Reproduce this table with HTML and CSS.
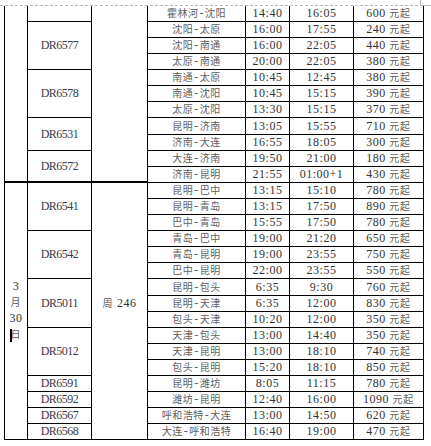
FILE: index.html
```html
<!DOCTYPE html>
<html lang="zh-CN">
<head>
<meta charset="utf-8">
<title>航班表</title>
<link rel="stylesheet" href="styles.css">
</head>
<body>
<div class="sheet">
  <div class="cut"></div>
  <span class="mark-v"></span><span class="mark-h"></span>
  <table class="tt">
    <colgroup>
      <col class="c1"><col class="c2"><col class="c3"><col class="c4"><col class="c5"><col class="c6"><col class="c7">
    </colgroup>
    <tbody>
      <tr class="r0"><td class="first" rowspan="11"></td><td class="first"></td><td class="first" rowspan="11"></td><td class="rt first">霍林河<span class="d">-</span>沈阳</td><td class="first">14:40</td><td class="first">16:05</td><td class="first">600 <span class="cn">元起</span></td></tr>
      <tr><td class="fn" rowspan="3">DR6577</td><td class="rt">沈阳<span class="d">-</span>太原</td><td>16:00</td><td>17:55</td><td>240 <span class="cn">元起</span></td></tr>
      <tr><td class="rt">沈阳<span class="d">-</span>南通</td><td>16:00</td><td>22:05</td><td>440 <span class="cn">元起</span></td></tr>
      <tr><td class="rt">太原<span class="d">-</span>南通</td><td>20:00</td><td>22:05</td><td>380 <span class="cn">元起</span></td></tr>
      <tr><td class="fn" rowspan="3">DR6578</td><td class="rt">南通<span class="d">-</span>太原</td><td>10:45</td><td>12:45</td><td>380 <span class="cn">元起</span></td></tr>
      <tr><td class="rt">南通<span class="d">-</span>沈阳</td><td>10:45</td><td>15:15</td><td>390 <span class="cn">元起</span></td></tr>
      <tr><td class="rt">太原<span class="d">-</span>沈阳</td><td>13:30</td><td>15:15</td><td>370 <span class="cn">元起</span></td></tr>
      <tr class="tall"><td class="fn" rowspan="2">DR6531</td><td class="rt">昆明<span class="d">-</span>济南</td><td>13:05</td><td>15:55</td><td>710 <span class="cn">元起</span></td></tr>
      <tr><td class="rt">济南<span class="d">-</span>大连</td><td>16:55</td><td>18:05</td><td>300 <span class="cn">元起</span></td></tr>
      <tr><td class="fn" rowspan="2">DR6572</td><td class="rt">大连<span class="d">-</span>济南</td><td>19:50</td><td>21:00</td><td>180 <span class="cn">元起</span></td></tr>
      <tr><td class="rt">济南<span class="d">-</span>昆明</td><td>21:55</td><td>01:00+1</td><td>430 <span class="cn">元起</span></td></tr>
      <tr><td class="grp date" rowspan="16">3<br><span class="cn">月</span><br>30<br><span class="cn">日</span></td><td class="grp fn" rowspan="3">DR6541</td><td class="grp week" rowspan="16"><span class="cn">周</span> 246</td><td class="rt">昆明<span class="d">-</span>巴中</td><td>13:15</td><td>15:10</td><td>780 <span class="cn">元起</span></td></tr>
      <tr><td class="rt">昆明<span class="d">-</span>青岛</td><td>13:15</td><td>17:50</td><td>890 <span class="cn">元起</span></td></tr>
      <tr><td class="rt">巴中<span class="d">-</span>青岛</td><td>15:55</td><td>17:50</td><td>780 <span class="cn">元起</span></td></tr>
      <tr><td class="fn" rowspan="3">DR6542</td><td class="rt">青岛<span class="d">-</span>巴中</td><td>19:00</td><td>21:20</td><td>650 <span class="cn">元起</span></td></tr>
      <tr><td class="rt">青岛<span class="d">-</span>昆明</td><td>19:00</td><td>23:55</td><td>750 <span class="cn">元起</span></td></tr>
      <tr><td class="rt">巴中<span class="d">-</span>昆明</td><td>22:00</td><td>23:55</td><td>550 <span class="cn">元起</span></td></tr>
      <tr class="tall"><td class="fn" rowspan="3">DR5011</td><td class="rt">昆明<span class="d">-</span>包头</td><td>6:35</td><td>9:30</td><td>760 <span class="cn">元起</span></td></tr>
      <tr><td class="rt">昆明<span class="d">-</span>天津</td><td>6:35</td><td>12:00</td><td>830 <span class="cn">元起</span></td></tr>
      <tr><td class="rt">包头<span class="d">-</span>天津</td><td>10:20</td><td>12:00</td><td>350 <span class="cn">元起</span></td></tr>
      <tr><td class="fn" rowspan="3">DR5012</td><td class="rt">天津<span class="d">-</span>包头</td><td>13:00</td><td>14:40</td><td>350 <span class="cn">元起</span></td></tr>
      <tr><td class="rt">天津<span class="d">-</span>昆明</td><td>13:00</td><td>18:10</td><td>740 <span class="cn">元起</span></td></tr>
      <tr><td class="rt">包头<span class="d">-</span>昆明</td><td>15:20</td><td>18:10</td><td>850 <span class="cn">元起</span></td></tr>
      <tr><td class="fn">DR6591</td><td class="rt">昆明<span class="d">-</span>潍坊</td><td>8:05</td><td>11:15</td><td>780 <span class="cn">元起</span></td></tr>
      <tr><td class="fn">DR6592</td><td class="rt">潍坊<span class="d">-</span>昆明</td><td>12:40</td><td>16:00</td><td>1090 <span class="cn">元起</span></td></tr>
      <tr><td class="fn">DR6567</td><td class="rt">呼和浩特<span class="d">-</span>大连</td><td>13:00</td><td>14:50</td><td>620 <span class="cn">元起</span></td></tr>
      <tr><td class="fn">DR6568</td><td class="rt">大连<span class="d">-</span>呼和浩特</td><td>16:40</td><td>19:00</td><td>470 <span class="cn">元起</span></td></tr>
    </tbody>
  </table>
  <span class="caret"></span>
</div>
</body>
</html>
```

FILE: styles.css
```css
html, body {
  margin: 0;
  padding: 0;
  background: #ffffff;
}

.sheet {
  position: relative;
  width: 431px;
  height: 446px;
  overflow: hidden;
  font-family: "Liberation Serif", "Noto Sans CJK SC", serif;
  font-size: 12px;
  color: #333333;
}

.cut {
  margin-top: 5px;
  width: 420px;
  height: 1px;
  background: repeating-linear-gradient(to right, #b8b8b8 0 3px, transparent 3px 5px);
}

.mark-v {
  position: absolute;
  left: 420px;
  top: 0;
  width: 1px;
  height: 6px;
  background: #b8b8b8;
}

.mark-h {
  position: absolute;
  left: 420px;
  top: 5px;
  width: 11px;
  height: 1px;
  background: #b8b8b8;
}

.tt {
  margin-left: 4px;
  width: 420px;
  table-layout: fixed;
  border-collapse: collapse;
}

.c1 { width: 23px; }
.c2 { width: 64px; }
.c3 { width: 56px; }
.c4 { width: 98px; }
.c5 { width: 44px; }
.c6 { width: 64px; }
.c7 { width: 70px; }

.tt tr { height: 16px; }
.tt tr.r0 { height: 15px; }
.tt tr.tall { height: 17px; }

.tt td {
  border: 1px solid #000000;
  padding: 0;
  text-align: center;
  vertical-align: middle;
  white-space: nowrap;
  line-height: 14px;
  letter-spacing: 0.5px;
}

.tt td.first { border-top: none; }

.tt td.grp { border-top: 2px solid #000000; }

.cn, .rt {
  font-family: "Noto Sans CJK SC", sans-serif;
  font-size: 10px;
  color: #606060;
  letter-spacing: 0.8px;
}

.rt .d {
  font-family: "Liberation Serif", serif;
  font-size: 12px;
  margin: 0 1px;
}

.tt td.fn {
  letter-spacing: -0.5px;
  color: #3a3a4a;
}

.tt td.date {
  white-space: normal;
  line-height: 15.5px;
}

.tt td.week {
  padding-bottom: 16px;
}

.caret {
  position: absolute;
  left: 10px;
  top: 329px;
  width: 2px;
  height: 13px;
  background: #000000;
}
```
